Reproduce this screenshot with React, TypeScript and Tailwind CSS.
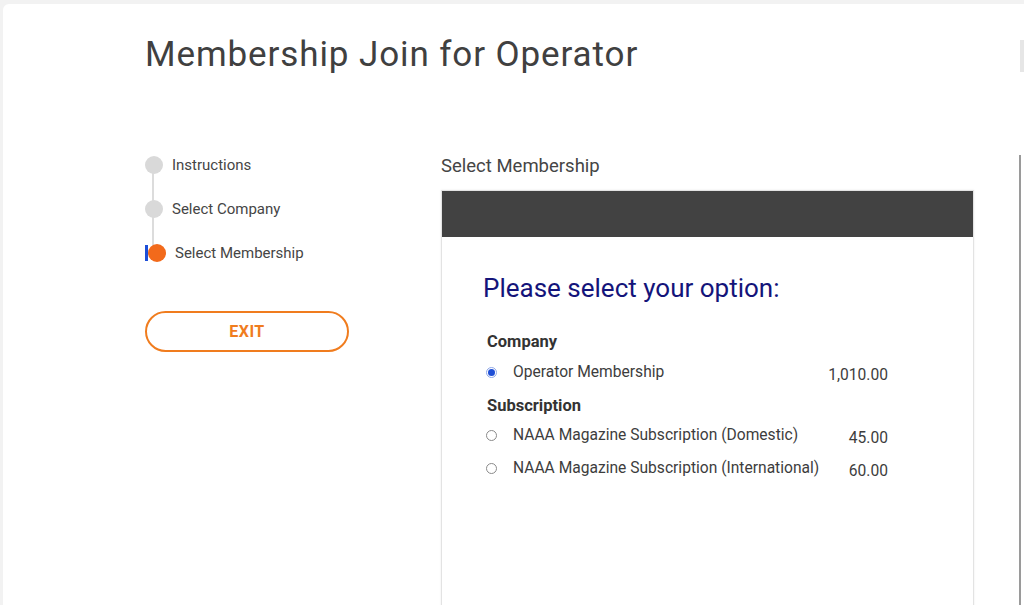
import React from 'react';

const steps = [
  { label: 'Instructions', active: false },
  { label: 'Select Company', active: false },
  { label: 'Select Membership', active: true }
];

const options = [
  {
    group: 'Company',
    items: [{ label: 'Operator Membership', amount: '1,010.00', checked: true }]
  },
  {
    group: 'Subscription',
    items: [
      { label: 'NAAA Magazine Subscription (Domestic)', amount: '45.00', checked: false },
      { label: 'NAAA Magazine Subscription (International)', amount: '60.00', checked: false }
    ]
  }
];

function Radio({ checked }: { checked: boolean }) {
  return checked ? (
    <span className="flex h-[11px] w-[11px] items-center justify-center rounded-full border border-[#8fa8e8] bg-white">
      <span className="h-[7px] w-[7px] rounded-full bg-[#1f4fd6]" />
    </span>
  ) : (
    <span className="h-[11px] w-[11px] rounded-full border border-[#8a8a8a] bg-white" />
  );
}

export default function App() {
  return (
    <div className="h-[605px] w-[1024px] overflow-hidden bg-[#f2f2f2] pl-[3px] pt-[4px] font-['Roboto',sans-serif]">
      <div className="relative h-full rounded-tl-[6px] bg-white pl-[142px]">
        {/* right edge scroll artifacts */}
        <div className="absolute right-0 top-[36px] h-[32px] w-[4px] bg-[#e6e6e6]" />
        <div className="absolute bottom-0 right-[3px] top-[151px] w-[2px] bg-[#9a9a9a]" />

        <h1 className="pt-[30px] text-[35px] leading-[42px] tracking-[0.9px] text-[#404040]">
          Membership Join for Operator
        </h1>

        <div className="mt-[73px] flex">
          {/* stepper */}
          <div className="w-[296px] pt-[7px]">
            <div className="relative">
              <div className="absolute left-[7px] top-[10px] h-[86px] w-[2px] bg-[#dcdcdc]" />
              {steps.map((s, i) => (
                <div key={s.label} className={`relative flex items-center ${i > 0 ? 'mt-[26px]' : ''}`}>
                  {s.active ? (
                    <span className="flex items-center">
                      <span className="h-[16px] w-[3px] bg-[#1d4fd8]" />
                      <span className="h-[18px] w-[18px] rounded-full bg-[#f26a1b]" />
                    </span>
                  ) : (
                    <span className="h-[18px] w-[18px] rounded-full bg-[#d9d9d9]" />
                  )}
                  <span className="ml-[9px] text-[15px] leading-[18px] text-[#454545]">{s.label}</span>
                </div>
              ))}
            </div>

            <button className="mt-[49px] flex h-[41px] w-[204px] items-center justify-center rounded-full border-2 border-[#f07c1e] text-[16px] font-bold tracking-[0.5px] text-[#f07c1e]">
              EXIT
            </button>
          </div>

          {/* membership panel */}
          <div className="w-[533px]">
            <h2 className="pt-[6px] text-[18.5px] leading-[22px] text-[#454545]">Select Membership</h2>
            <div className="mt-[13px] border border-[#e3e3e3] shadow-[0_0_2px_rgba(0,0,0,0.08)]">
              <div className="h-[46px] bg-[#424242]" />
              <div className="h-[400px] pl-[41px] pr-[85px] pt-[35px]">
                <p className="text-[26px] leading-[32px] text-[#14147a]">Please select your option:</p>
                <div className="mt-[28px]">
                  {options.map((g, gi) => (
                    <div key={g.group} className={gi > 0 ? 'mt-[11px]' : ''}>
                      <div className="pl-[4px] text-[16.5px] font-bold leading-[20px] text-[#333333]">{g.group}</div>
                      {g.items.map((it, ii) => (
                        <div
                          key={it.label}
                          className={`flex items-start ${ii > 0 ? 'mt-[10px]' : gi > 0 ? 'mt-[9px]' : 'mt-[10px]'}`}
                        >
                          <div className="flex w-[14px] justify-end pt-[5px]">
                            <Radio checked={it.checked} />
                          </div>
                          <span className="ml-[16px] flex-1 text-[15.6px] leading-[20px] text-[#3d3d3d]">{it.label}</span>
                          <span className="pt-[3px] text-[15.6px] leading-[20px] text-[#3d3d3d]">{it.amount}</span>
                        </div>
                      ))}
                    </div>
                  ))}
                </div>
              </div>
            </div>
          </div>
        </div>
      </div>
    </div>
  );
}
